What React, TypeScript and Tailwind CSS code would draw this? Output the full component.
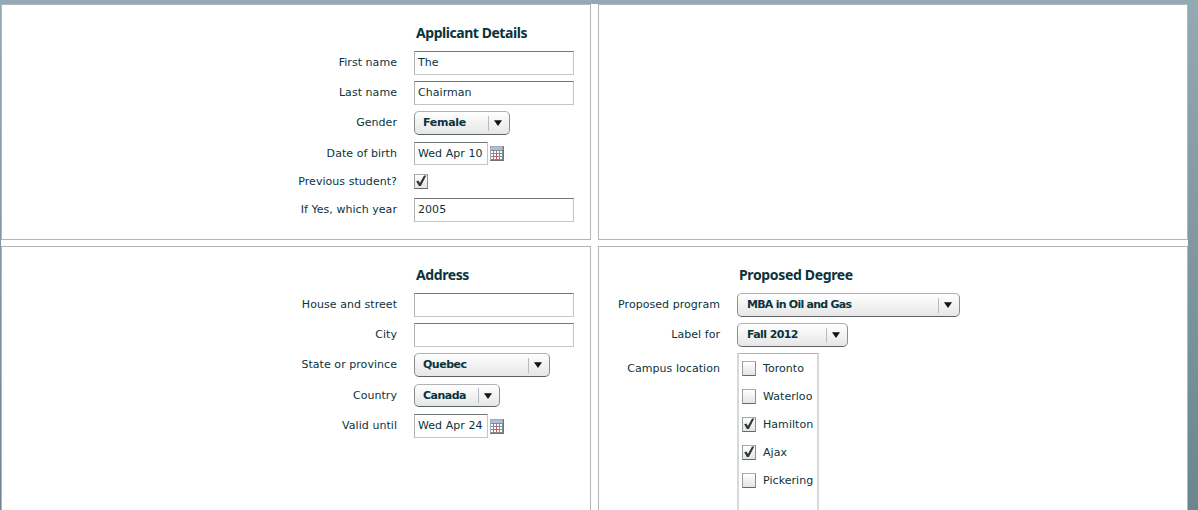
import type { ReactNode } from 'react';

function Heading({ children, className }: { children: ReactNode; className: string }) {
  return (
    <h2
      className={`w-fit whitespace-nowrap font-['Noto_Sans','Liberation_Sans',sans-serif] text-[14px] leading-[20px] font-bold text-[#0b333c] ${className}`}
    >
      {children}
    </h2>
  );
}

function Row({ label, className, labelWidth, children }: {
  label: string;
  className: string;
  labelWidth: string;
  children: ReactNode;
}) {
  return (
    <div className={`flex items-center ${className}`}>
      <span className={`shrink-0 text-right whitespace-nowrap ${labelWidth}`}>{label}</span>
      <div className="ml-[17px] flex items-center">{children}</div>
    </div>
  );
}

function TextField({ value = '', width = 'w-[160px]', height = 'h-[24px]' }: { value?: string; width?: string; height?: string }) {
  return (
    <div
      className={`overflow-hidden border border-t-[#6f7777] border-r-[#c4c7c7] border-b-[#c4c7c7] border-l-[#b0b4b5] bg-white pl-[3px] leading-[21px] whitespace-nowrap ${width} ${height}`}
    >
      {value}
    </div>
  );
}

function Dropdown({ value, width, height = 'h-[24px]', text = 'pl-[8px] tracking-[-0.28px]' }: {
  value: string;
  width: string;
  height?: string;
  text?: string;
}) {
  return (
    <div
      className={`flex items-center rounded-[5px] border border-t-[#b0b3b4] border-r-[#8a8e90] border-b-[#5c6164] border-l-[#8a8e90] bg-linear-to-b from-white to-[#e6e6e6] ${width} ${height}`}
    >
      <span className={`flex-1 text-[11px] font-bold whitespace-nowrap ${text}`}>{value}</span>
      <span className="h-[15px] w-px bg-[#b9bcbe]" />
      <svg className="mr-[7px] ml-[5px]" width="8" height="6" viewBox="0 0 8 6">
        <path d="M0 0.3H8L4 6Z" fill="#111" />
      </svg>
    </div>
  );
}

function CheckBox({ checked }: { checked: boolean }) {
  return (
    <span className="flex h-[15px] w-[14px] shrink-0 items-center justify-center border border-t-[#a8adb0] border-r-[#898e91] border-b-[#63686b] border-l-[#989da0] bg-linear-to-b from-white to-[#e4e4e6]">
      {checked && (
        <svg width="12" height="13" viewBox="0 0 12 13">
          <path d="M1.2 6.2L3.4 5.4L4.9 8L9 0.4H11.3L5.9 11H3.9Z" fill="#30363a" />
        </svg>
      )}
    </span>
  );
}

function CalendarIcon() {
  return (
    <svg className="ml-[2px]" width="14" height="15" viewBox="0 0 14 15" shapeRendering="crispEdges">
      <rect width="14" height="15" fill="#6e757a" />
      <rect width="13" height="14" fill="#a3acb5" />
      <rect x="1" y="1" width="11" height="3" fill="#a9c0dc" />
      <rect x="1" y="4" width="12" height="10" fill="#838a90" />
      <g fill="#fff">
        <path d="M1 5h2v2H1zM4 5h2v2H4zM7 5h2v2H7zM10 5h2v2h-2z" />
        <path d="M1 8h2v2H1zM4 8h2v2H4zM7 8h2v2H7zM10 8h2v2h-2z" />
        <path d="M1 11h2v2H1zM4 11h2v2H4zM7 11h2v2H7zM10 11h2v2h-2z" />
      </g>
      <path d="M6 7h1v6H6zM3 10h5v1H3z" fill="#c45d68" />
    </svg>
  );
}

const campuses = [
  { name: 'Toronto', checked: false },
  { name: 'Waterloo', checked: false },
  { name: 'Hamilton', checked: true },
  { name: 'Ajax', checked: true },
  { name: 'Pickering', checked: false },
];

const left = 'w-[395px]';
const right = 'w-[121px]';

export default function App() {
  return (
    <main className="h-[510px] w-[1198px] overflow-hidden bg-linear-to-b from-[#93a9b4] to-[#6c858f] pt-[4px] pl-px font-['DejaVu_Sans',Verdana,sans-serif] text-[11px] leading-[14px] tracking-[0.05px] text-[#0b333c]">
      <div className="grid h-[506px] w-[1187px] grid-cols-[590px_590px] grid-rows-[236px_300px] gap-x-[7px] gap-y-[6px] overflow-hidden bg-white">
        <section className="border border-[#b0b7ba] pt-[18px]">
          <Heading className="ml-[414px] tracking-[-0.45px]">Applicant Details</Heading>
          <Row label="First name" labelWidth={left} className="mt-[8px] h-[24px]"><TextField value="The" /></Row>
          <Row label="Last name" labelWidth={left} className="mt-[6px] h-[24px]"><TextField value="Chairman" /></Row>
          <Row label="Gender" labelWidth={left} className="mt-[6px] h-[24px]"><Dropdown value="Female" width="w-[96px]" /></Row>
          <Row label="Date of birth" labelWidth={left} className="mt-[7px] h-[23px]">
            <TextField value="Wed Apr 10" width="w-[74px]" height="h-[23px]" />
            <CalendarIcon />
          </Row>
          <Row label="Previous student?" labelWidth={left} className="mt-[9px] h-[15px]"><CheckBox checked /></Row>
          <Row label="If Yes, which year" labelWidth={left} className="mt-[9px] h-[24px]"><TextField value="2005" /></Row>
        </section>

        <section className="border border-[#b0b7ba]" />

        <section className="border border-[#b0b7ba] pt-[18px]">
          <Heading className="ml-[414px] tracking-[-0.4px]">Address</Heading>
          <Row label="House and street" labelWidth={left} className="mt-[8px] h-[24px]"><TextField /></Row>
          <Row label="City" labelWidth={left} className="mt-[6px] h-[24px]"><TextField /></Row>
          <Row label="State or province" labelWidth={left} className="mt-[6px] h-[24px]"><Dropdown value="Quebec" width="w-[136px]" text="pl-[8px] tracking-[-0.5px]" /></Row>
          <Row label="Country" labelWidth={left} className="mt-[7px] h-[23px]"><Dropdown value="Canada" width="w-[86px]" height="h-[23px]" text="pl-[8px] tracking-[-0.5px]" /></Row>
          <Row label="Valid until" labelWidth={left} className="mt-[7px] h-[24px]">
            <TextField value="Wed Apr 24" width="w-[74px]" />
            <CalendarIcon />
          </Row>
        </section>

        <section className="border border-[#b0b7ba] pt-[18px]">
          <Heading className="ml-[140px] tracking-[-0.35px]">Proposed Degree</Heading>
          <Row label="Proposed program" labelWidth={right} className="mt-[8px] h-[24px]"><Dropdown value="MBA in Oil and Gas" width="w-[223px]" text="pl-[9px] tracking-[-0.75px]" /></Row>
          <Row label="Label for" labelWidth={right} className="mt-[6px] h-[24px]"><Dropdown value="Fall 2012" width="w-[111px]" text="pl-[9px] tracking-[-0.6px]" /></Row>
          <div className="mt-[6px] flex items-start">
            <span className={`mt-[9px] shrink-0 text-right whitespace-nowrap ${right}`}>Campus location</span>
            <ul className="ml-[17px] flex h-[190px] w-[82px] flex-col gap-[13px] border border-x-2 border-t-[#aeb3b5] border-x-[#d6d9da] pt-[7px] pl-[3px]">
              {campuses.map((campus) => (
                <li key={campus.name} className="flex h-[15px] items-center gap-[7px]">
                  <CheckBox checked={campus.checked} />
                  <span className="whitespace-nowrap">{campus.name}</span>
                </li>
              ))}
            </ul>
          </div>
        </section>
      </div>
    </main>
  );
}
